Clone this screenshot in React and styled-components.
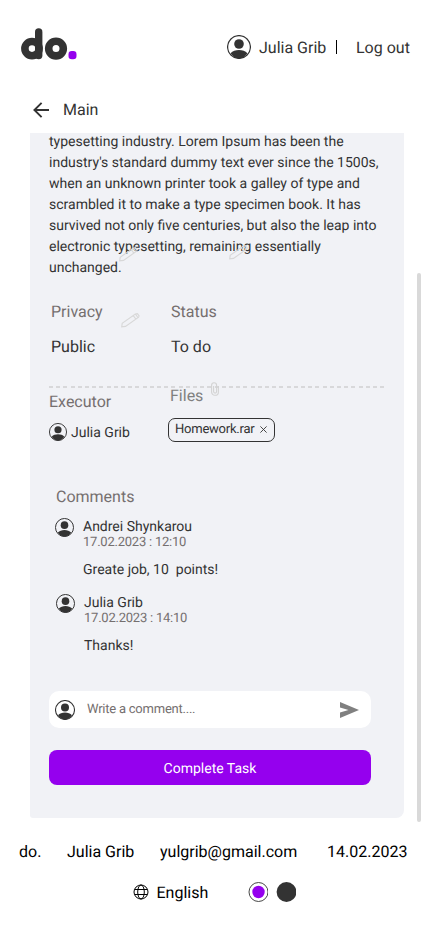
import React from 'react';
import styled, { createGlobalStyle } from 'styled-components';

const ink = '#333333';
const muted = '#756f6f';
const accent = '#9500ee';

const GlobalStyle = createGlobalStyle`
  *, *::before, *::after { box-sizing: border-box; }
  body {
    margin: 0;
    background: #fff;
    color: ${ink};
    font-family: Roboto, "Liberation Sans", sans-serif;
    font-size: 16px;
    line-height: 20px;
    text-rendering: geometricPrecision;
  }
  svg { display: block; flex: none; }
  button, input { font: inherit; text-rendering: inherit; }
`;

const Page = styled.div`
  display: flex;
  flex-direction: column;
  width: 430px;
  height: 932px;
  overflow: hidden;
  position: relative;
`;

const Header = styled.header`
  display: flex;
  align-items: center;
  height: 94px;
  padding: 0 20px;
`;

const LogoLink = styled.div`
  margin-bottom: 4px;
`;

const Account = styled.div`
  display: flex;
  align-items: center;
  margin-left: auto;
`;

const AccountName = styled.span`
  width: 68px;
  margin-left: 8px;
  padding-top: 1px;
  white-space: nowrap;
`;

const Divider = styled.span`
  width: 1px;
  height: 14px;
  margin: 0 19px 0 9px;
  background: #000;
`;

const TextButton = styled.button`
  width: 54px;
  padding: 1px 0 0;
  border: 0;
  background: none;
  color: inherit;
  text-align: left;
  white-space: nowrap;
`;

const BackRow = styled.nav`
  display: flex;
  align-items: center;
  gap: 14px;
  height: 39px;
  padding: 6px 0 13px 33px;
`;

const Panel = styled.main`
  display: flex;
  flex-direction: column;
  position: relative;
  width: 374px;
  height: 685px;
  margin-left: 30px;
  padding: 0 19px;
  overflow: hidden;
  border-radius: 0 0 8px 3px;
  background: #f1f2f6;
`;

const Description = styled.p`
  width: 336px;
  height: 146px;
  margin: -1px 0 0;
  font-size: 14px;
  line-height: 21px;
  white-space: pre-line;
`;

const Facts = styled.dl`
  display: grid;
  grid-template-columns: 120px 1fr;
  row-gap: 15px;
  margin: 24px 0 29px;
  padding-left: 2px;
`;

const Label = styled.dt`
  color: ${muted};
`;

const Value = styled.dd`
  margin: 0;
`;

const DashedLine = styled.div`
  width: 335px;
  height: 2px;
  margin-bottom: -1px;
  flex: none;
  background: repeating-linear-gradient(to right, #d8d8da 0 4px, transparent 4px 7.2px);
`;

const Assets = styled.section`
  display: flex;
  height: 100px;
`;

const Executor = styled.div`
  width: 119px;
  padding-top: 5px;
`;

const Files = styled.div`
  margin-top: -1px;
`;

const SectionTitle = styled.h2`
  margin: 0 0 0 ${p => p.$indent || '0'};
  color: ${p => p.$tone || muted};
  font-size: 16px;
  font-weight: 400;
  line-height: 20px;
`;

const Person = styled.div`
  display: flex;
  align-items: center;
  gap: 4px;
  margin-top: 10px;
  font-size: 14px;
  line-height: 18px;
`;

const PersonName = styled.span`
  padding-top: 2px;
  margin-bottom: -1px;
`;

const FileTag = styled.div`
  display: flex;
  align-items: center;
  justify-content: space-between;
  width: 107px;
  height: 24px;
  margin-top: 12px;
  padding: 0 7px 1px 6px;
  border: 1px solid ${ink};
  border-radius: 7px;
  font-size: 13px;
  line-height: 18px;
  letter-spacing: -0.23px;
`;

const Comments = styled.section`
  display: flex;
  flex-direction: column;
  height: 204px;
`;

const Comment = styled.article`
  display: flex;
  gap: 9px;
  height: 76px;
  padding-left: ${p => p.$indent};
  padding-top: 11px;
`;

const CommentBody = styled.div`
  padding-top: 1px;
  font-size: 14px;
  line-height: 16px;
`;

const Time = styled.time`
  display: block;
  color: ${muted};
  font-size: 13px;
  line-height: 15px;
  letter-spacing: -0.23px;
`;

const Message = styled.p`
  margin: 12px 0 0;
  white-space: pre;
`;

const CommentForm = styled.form`
  display: flex;
  align-items: center;
  width: 322px;
  height: 37px;
  margin-bottom: 22px;
  padding: 0 12px 0 6px;
  border-radius: 10px;
  background: #fff;
`;

const CommentInput = styled.input`
  flex: 1;
  min-width: 0;
  margin-left: 12px;
  padding: 0;
  border: 0;
  outline: 0;
  background: none;
  font-size: 13px;
  line-height: 18px;
  letter-spacing: -0.23px;
  &::placeholder { color: ${muted}; opacity: 1; }
`;

const CompleteButton = styled.button`
  width: 322px;
  height: 35px;
  padding: 2px 0 0;
  border: 0;
  border-radius: 8px;
  background: ${accent};
  color: #fff;
  font-size: 14px;
`;

const FloatingIcon = styled.span`
  position: absolute;
  left: ${p => p.$left};
  top: ${p => p.$top};
  z-index: 1;
`;

const ScrollThumb = styled.div`
  position: absolute;
  right: 9px;
  top: 273px;
  width: 4px;
  height: 549px;
  border-radius: 2px;
  background: #d9d9d9;
`;

const Footer = styled.footer`
  color: #000;
`;

const FooterInfo = styled.div`
  display: grid;
  grid-template-columns: 48px 93px 167px auto;
  height: 20px;
  margin: 24px 0 0 19px;
`;

const FooterControls = styled.div`
  display: flex;
  align-items: center;
  margin: 20px 0 0 133px;
`;

const Language = styled.span`
  width: 91.9px;
  margin-left: 7.5px;
  padding-top: 1px;
  margin-bottom: -1px;
`;

const ThemeDot = styled.svg`
  margin-right: 8px;
`;

function Logo() {
  return (
    <svg width="58" height="34" viewBox="0 0 58 34" role="img" aria-label="do.">
      <g fill="none" stroke={ink}>
        <circle cx="12" cy="20.6" r="7.1" strokeWidth="7.6" />
        <path d="M18.7 4v23.6" strokeWidth="7.4" strokeLinecap="round" />
        <circle cx="36" cy="20.6" r="7.3" strokeWidth="7.6" />
      </g>
      <rect x="48.5" y="23.1" width="8" height="8.2" rx="3.3" fill={accent} />
    </svg>
  );
}

function Avatar({ size }) {
  return (
    <svg width={size} height={size} viewBox="0 0 24 24">
      <circle cx="12" cy="12" r="11.4" fill="none" stroke={ink} strokeWidth="1.25" />
      <circle cx="12" cy="9" r="4.8" fill={ink} />
      <path d="M3.6 18.2C5.6 16.2 8.6 15.1 12 15.1s6.4 1.1 8.4 3.1A11.5 11.5 0 0 1 12 23.6a11.5 11.5 0 0 1-8.4-5.4Z" fill={ink} />
    </svg>
  );
}

function BackArrow() {
  return (
    <svg width="16" height="16" viewBox="0 0 16 16" fill="none" stroke={ink} strokeWidth="1.9">
      <path d="M16 8H1.4M8.6.8 1.4 8l7.2 7.2" />
    </svg>
  );
}

function Pencil() {
  return (
    <svg width="19" height="15" viewBox="0 0 19 15" fill="none" stroke="#d8d8d8" strokeWidth="1.1">
      <path d="m.7 13.8.5-3.5L14.3 1l2.1-.3 1.7 2.2-.5 1.3L4.5 13.4ZM12.2 2.5l2.5 3.4M14.3 1l2.6 3.5" />
    </svg>
  );
}

function PaperClip() {
  return (
    <svg width="8" height="14" viewBox="0 0 8 14" fill="none" stroke="#d3d3d3" strokeWidth="1.1">
      <path d="M.6 3.7v6.2a3.4 3.4 0 0 0 6.8 0V4M.6 4V3.2a2.5 2.5 0 0 1 5 0v6.4a1.5 1.5 0 0 1-3 0V4" />
    </svg>
  );
}

function CloseIcon() {
  return (
    <svg width="7" height="7" viewBox="0 0 7 7" stroke={ink} strokeWidth=".9">
      <path d="m.4.4 6.2 6.2m0-6.2L.4 6.6" />
    </svg>
  );
}

function SendIcon() {
  return (
    <svg width="19" height="16" viewBox="0 0 19 16" fill="#808080">
      <path d="M0 0v5.6L8.5 8 0 10.4V16l19-8Z" />
    </svg>
  );
}

function Globe() {
  return (
    <svg width="16" height="16" viewBox="0 0 16 16" fill="none" stroke="#000" strokeWidth="1">
      <circle cx="8" cy="8" r="7" />
      <ellipse cx="8" cy="8" rx="3.3" ry="7" />
      <path d="M1.6 5.5h12.8M1.6 10.5h12.8" />
    </svg>
  );
}

function ThemeOption({ ring }) {
  return (
    <ThemeDot width="20" height="20" viewBox="-.5 0 20 20">
      {ring ? (
        <>
          <circle cx="10" cy="10" r="9.5" fill="#fff" stroke={ink} strokeWidth=".9" />
          <circle cx="10" cy="10" r="6.2" fill={accent} />
        </>
      ) : (
        <circle cx="10" cy="10" r="9.9" fill={ink} />
      )}
    </ThemeDot>
  );
}

const description = `typesetting industry. Lorem Ipsum has been the
industry's standard dummy text ever since the 1500s,
when an unknown printer took a galley of type and
scrambled it to make a type specimen book. It has
survived not only five centuries, but also the leap into
electronic typesetting, remaining essentially
unchanged.`;

const comments = [
  { author: 'Andrei Shynkarou', time: '17.02.2023 : 12:10', text: 'Greate job, 10  points!', indent: '6px' },
  { author: 'Julia Grib', time: '17.02.2023 : 14:10', text: 'Thanks!', indent: '7px' },
];

export default function App() {
  return (
    <Page>
      <GlobalStyle />
      <Header>
        <LogoLink><Logo /></LogoLink>
        <Account>
          <Avatar size={24} />
          <AccountName>Julia Grib</AccountName>
          <Divider />
          <TextButton>Log out</TextButton>
        </Account>
      </Header>
      <BackRow>
        <BackArrow />
        <span>Main</span>
      </BackRow>
      <Panel>
        <Description>{description}</Description>
        <FloatingIcon $left="89px" $top="114px"><Pencil /></FloatingIcon>
        <FloatingIcon $left="199px" $top="112px"><Pencil /></FloatingIcon>
        <FloatingIcon $left="91px" $top="180px"><Pencil /></FloatingIcon>
        <FloatingIcon $left="181px" $top="249px"><PaperClip /></FloatingIcon>
        <Facts>
          <Label>Privacy</Label>
          <Label>Status</Label>
          <Value>Public</Value>
          <Value>To do</Value>
        </Facts>
        <DashedLine />
        <Assets>
          <Executor>
            <SectionTitle>Executor</SectionTitle>
            <Person><Avatar size={18} /><PersonName>Julia Grib</PersonName></Person>
          </Executor>
          <Files>
            <SectionTitle $indent="2px" $tone="#808080">Files</SectionTitle>
            <FileTag>Homework.rar<CloseIcon /></FileTag>
          </Files>
        </Assets>
        <Comments>
          <SectionTitle $indent="7px">Comments</SectionTitle>
          {comments.map(c => (
            <Comment key={c.time} $indent={c.indent}>
              <Avatar size={19} />
              <CommentBody>
                {c.author}
                <Time>{c.time}</Time>
                <Message>{c.text}</Message>
              </CommentBody>
            </Comment>
          ))}
        </Comments>
        <CommentForm>
          <Avatar size={20} />
          <CommentInput placeholder="Write a comment...." />
          <SendIcon />
        </CommentForm>
        <CompleteButton>Complete Task</CompleteButton>
      </Panel>
      <ScrollThumb />
      <Footer>
        <FooterInfo>
          <span>do.</span>
          <span>Julia Grib</span>
          <span>yulgrib@gmail.com</span>
          <span>14.02.2023</span>
        </FooterInfo>
        <FooterControls>
          <Globe />
          <Language>English</Language>
          <ThemeOption ring />
          <ThemeOption />
        </FooterControls>
      </Footer>
    </Page>
  );
}
